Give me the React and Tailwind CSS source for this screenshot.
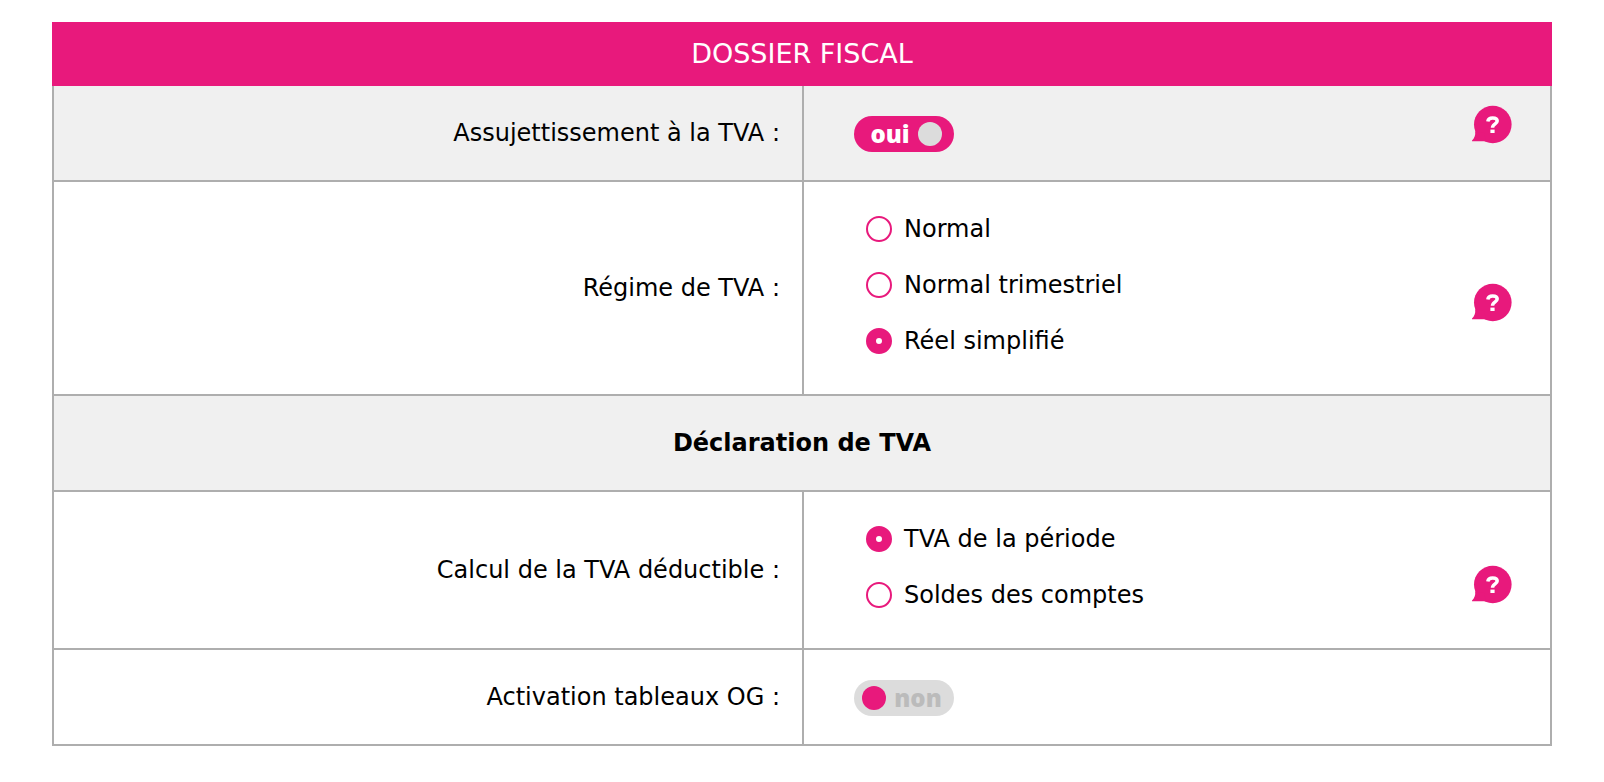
import React from 'react'
import { useState } from 'react';

const regimes = ['Normal', 'Normal trimestriel', 'Réel simplifié'];
const calculs = ['TVA de la période', 'Soldes des comptes'];

function HelpButton({ label }) {
  return (
    <button type="button" aria-label={label} className="block h-10 w-10 cursor-pointer">
      <svg viewBox="0 0 40 40" className="h-10 w-10" aria-hidden="true">
        <circle cx="20.8" cy="19.5" r="18.8" fill="#e8197c" />
        <path d="M3.2 26.5C3.6 30.5 2.4 33 0 35.6V36.2H14L12 28Z" fill="#e8197c" />
        <path d="M15.8 16.4C16.2 13.8 18 12.9 20.6 12.9C23.4 12.9 25.2 14.1 25.2 16.1C25.2 19 20.5 18.8 20.5 22.8" fill="none" stroke="#fff" strokeWidth="3.5" />
        <rect x="18.4" y="24.6" width="4.2" height="3.4" fill="#fff" />
      </svg>
    </button>
  )
}

function Toggle({ id, checked, onChange }) {
  return (
    <label className={`relative flex h-9 w-[100px] cursor-pointer items-center rounded-full px-2 ${checked ? 'bg-[#e8197c]' : 'flex-row-reverse bg-[#dcdcdc]'}`}>
      <input id={id} type="checkbox" role="switch" checked={checked} onChange={onChange} className="absolute inset-0 cursor-pointer appearance-none" />
      <span className={`flex-1 text-center font-['Open_Sans',sans-serif] text-2xl leading-9 font-extrabold ${checked ? 'text-white' : 'text-[#bbbbbb]'}`}>
        {checked ? 'oui' : 'non'}
      </span>
      <span className={`mr-1 h-6 w-6 rounded-full ${checked ? 'bg-[#dcdcdc]' : 'bg-[#e8197c]'}`} />
    </label>
  )
}

function RadioGroup({ name, label, options, value, onChange }) {
  return (
    <div role="radiogroup" aria-label={label} className="flex flex-col pt-[19px] pb-[25px] pl-3">
      {options.map(option => (
        <label key={option} className="flex h-14 cursor-pointer items-center gap-3">
          <input
            type="radio"
            name={name}
            value={option}
            checked={value === option}
            onChange={() => onChange(option)}
            className="h-[26px] w-[26px] shrink-0 cursor-pointer appearance-none rounded-full border-2 border-[#e8197c] bg-white checked:border-10"
          />
          {option}
        </label>
      ))}
    </div>
  )
}

function Row({ label, htmlFor, className = '', children }) {
  return (
    <div className={`grid grid-cols-2 border-b-2 border-[#aeaeae] ${className}`}>
      <div className="flex items-center justify-end pr-[22px] text-right">
        {htmlFor ? <label htmlFor={htmlFor}>{label}</label> : <span>{label}</span>}
      </div>
      <div className="flex justify-between border-l-2 border-[#aeaeae] pr-[38px] pl-[50px]">
        {children}
      </div>
    </div>
  )
}

function App() {
  const [assujetti, setAssujetti] = useState(true);
  const [tableauxOG, setTableauxOG] = useState(false);
  const [regime, setRegime] = useState('Réel simplifié');
  const [calcul, setCalcul] = useState('TVA de la période');

  return (
    <main className="bg-white px-[52px] py-[22px] font-[Verdana,'DejaVu_Sans',sans-serif] text-2xl text-black">
      <h1 className="bg-[#e8197c] text-center text-[27px] leading-[64px] text-white">DOSSIER FISCAL</h1>
      <form className="border-x-2 border-[#aeaeae]">
        <Row label="Assujettissement à la TVA :" htmlFor="assujetti" className="bg-[#f0f0f0]">
          <div className="pt-[30px] pb-7">
            <Toggle id="assujetti" checked={assujetti} onChange={() => setAssujetti(!assujetti)} />
          </div>
          <div className="pt-[19px]">
            <HelpButton label="Aide assujettissement" />
          </div>
        </Row>
        <Row label="Régime de TVA :">
          <RadioGroup name="regime" label="Régime de TVA" options={regimes} value={regime} onChange={setRegime} />
          <div className="flex items-center pt-[30px]">
            <HelpButton label="Aide régime" />
          </div>
        </Row>
        <h2 className="border-b-2 border-[#aeaeae] bg-[#f0f0f0] text-center leading-[94px] font-bold">Déclaration de TVA</h2>
        <Row label="Calcul de la TVA déductible :">
          <RadioGroup name="calcul" label="Calcul de la TVA déductible" options={calculs} value={calcul} onChange={setCalcul} />
          <div className="flex items-center pt-[30px]">
            <HelpButton label="Aide calcul" />
          </div>
        </Row>
        <Row label="Activation tableaux OG :" htmlFor="tableaux-og">
          <div className="pt-[30px] pb-7">
            <Toggle id="tableaux-og" checked={tableauxOG} onChange={() => setTableauxOG(!tableauxOG)} />
          </div>
        </Row>
      </form>
    </main>
  )
}


export default App
